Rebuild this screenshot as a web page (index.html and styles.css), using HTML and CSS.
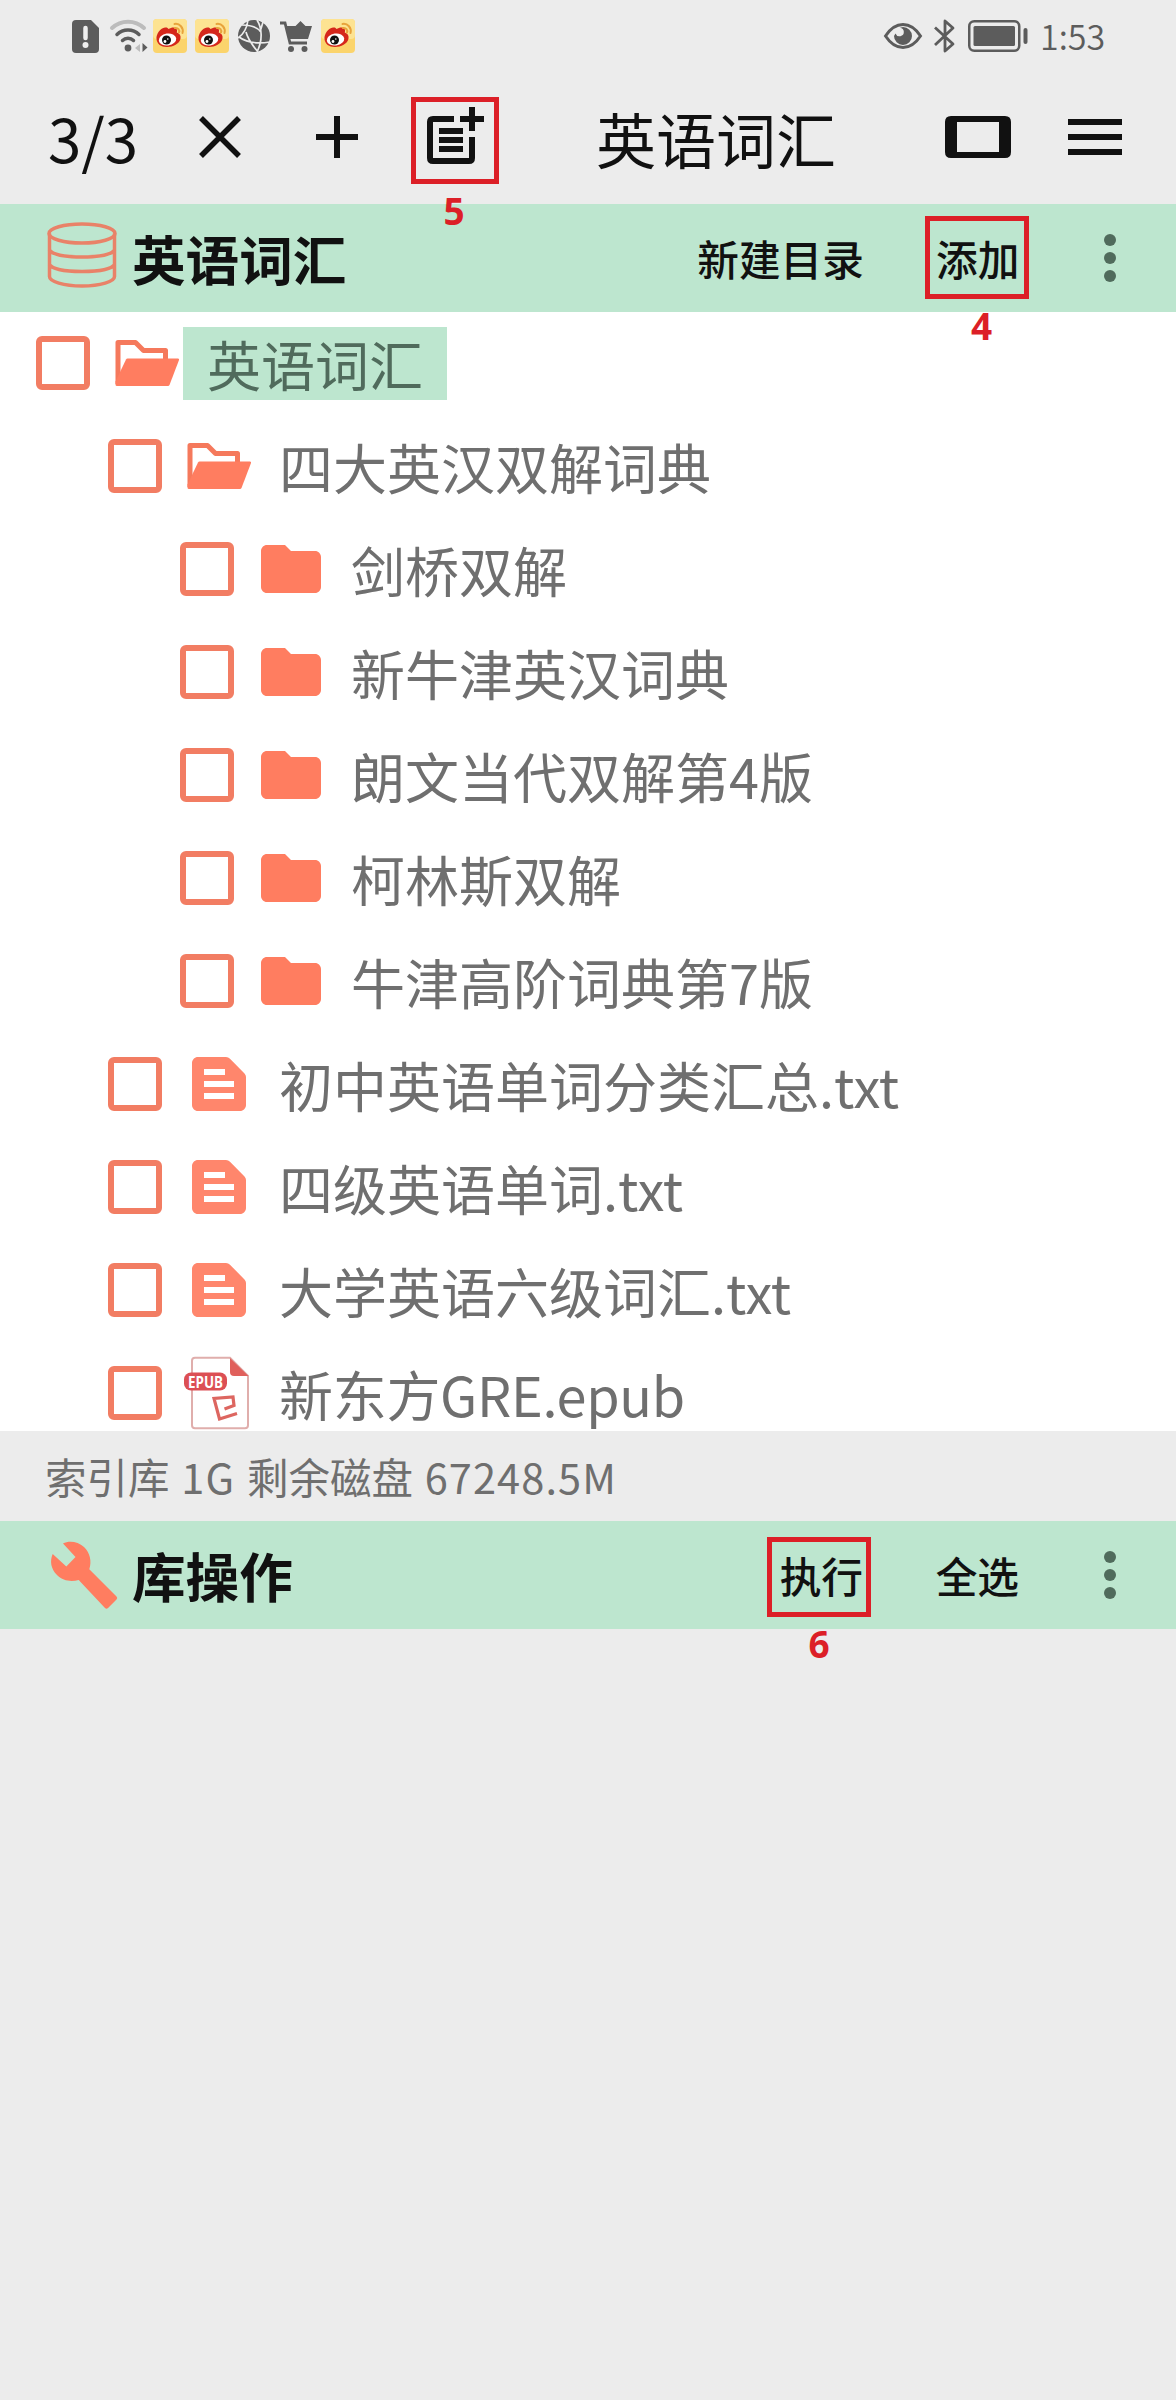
FILE: index.html
```html
<!DOCTYPE html>
<html lang="zh-CN">
<head>
<meta charset="utf-8">
<title>英语词汇</title>
<link rel="stylesheet" href="styles.css">
</head>
<body>
<svg class="defs" aria-hidden="true">
  <symbol id="weibo" viewBox="0 0 34 34">
    <rect width="34" height="34" rx="4" fill="#fbd46c"/>
    <rect width="34" height="20" rx="4" fill="#fde392"/>
    <path d="M3.500 20C3 15 7.500 9 12 8.500c2-.3 3 .5 3.500 1.500 3-2 8-2.500 8.500 1 .2 1-.2 2-.2 2.500 3 1 4.200 3 3.700 6C26.500 25 20 28 14 28 8 28 4 25 3.500 20z" fill="#d5271b"/>
    <ellipse cx="14.500" cy="20.500" rx="8.800" ry="6" fill="#fff" transform="rotate(-8 14.500 20.500)"/>
    <circle cx="13.500" cy="21" r="4.500" fill="#111"/>
    <circle cx="12" cy="22.500" r="1.400" fill="#fff"/>
    <circle cx="14.800" cy="20" r=".8" fill="#fff"/>
    <path d="M21.500 5c5-1 9.500 4 8 9M22 9c3-.5 5 2 4 4.500" fill="none" stroke="#e8a33c" stroke-width="2" stroke-linecap="round"/>
  </symbol>
  <symbol id="check" viewBox="0 0 72 72">
    <rect x="12" y="12" width="48" height="48" rx="3" fill="none" stroke="#f27d63" stroke-width="6"/>
  </symbol>
  <symbol id="open" viewBox="0 0 72 72">
    <path d="M7 57V15.500h17.500l8 8H54.500V34" fill="none" stroke="#f5795c" stroke-width="5" stroke-linejoin="round"/>
    <path d="M16.500 31.500H67q1.500 0 1 1.500L58.500 58q-.5 1-1.500 1H6q-1.500 0-1.500-1.500v-3L15 32.500q.5-1 1.500-1z" fill="#ff7d60"/>
  </symbol>
  <symbol id="folder" viewBox="0 0 72 72">
    <path d="M30 12H12c-3.300 0-6 2.700-6 6v36c0 3.300 2.700 6 6 6h48c3.300 0 6-2.700 6-6V24c0-3.300-2.700-6-6-6H36z" fill="#ff7d60"/>
  </symbol>
  <symbol id="txt" viewBox="0 0 72 72">
    <path fill-rule="evenodd" d="M43 9H15c-3.300 0-6 2.700-6 6v42c0 3.300 2.700 6 6 6h42c3.300 0 6-2.700 6-6V29q0-2-1.500-3.500L47 10.700Q45.300 9 43 9zM21 21h21v6H21zM21 33h30v6H21zM21 45h30v6H21z" fill="#ff866c"/>
  </symbol>
  <symbol id="more" viewBox="0 0 12 48">
    <circle cx="6" cy="6" r="6"/><circle cx="6" cy="24" r="6"/><circle cx="6" cy="42" r="6"/>
  </symbol>
</svg>

<header class="status">
  <div class="status-left">
    <svg class="s-warn" viewBox="0 0 27 33"><path d="M4 0h15l8 8v21q0 4-4 4H4q-4 0-4-4V4q0-4 4-4z" fill="#5c5c5c"/><path d="M13.500 8v10" stroke="#eee" stroke-width="4.500" stroke-linecap="round"/><circle cx="13.500" cy="25" r="3" fill="#eee"/></svg>
    <svg class="s-wifi" viewBox="0 0 38 33"><g fill="none" stroke-width="4" stroke-linecap="round"><path d="M2 8C11-.5 25-.5 34 8" stroke="#bcbcbc"/><path d="M7 14.500c6-6 16-6 22 0M12.500 20.500c3-3 8-3 11 0" stroke="#5c5c5c" stroke-width="3.500"/></g><circle cx="18" cy="28" r="3.400" fill="#5c5c5c"/><path d="M30 24v8l-5-4z" fill="#bcbcbc"/><path d="M32.500 23v9l5-4.500z" fill="#5c5c5c"/></svg>
    <svg class="s-weibo"><use href="#weibo"/></svg>
    <svg class="s-weibo"><use href="#weibo"/></svg>
    <svg class="s-globe" viewBox="0 0 32 32"><circle cx="16" cy="16" r="16" fill="#5c5c5c"/><path d="M10 0c-1 8-4 14-10 18M4 5c9 0 16 3 19 7M19 0c5 8 6 20 0 32M1 17c8 6 18 7 31 5M8 12c2 8 7 14 12 20M22 12l3-10" fill="none" stroke="#ececec" stroke-width="1.700"/></svg>
    <svg class="s-cart" viewBox="0 0 32 31"><path d="M0 2h5l5 20h17" fill="none" stroke="#5c5c5c" stroke-width="2.800"/><path d="M5.500 5h10l5-5 5 5H32l-4 13H9z" fill="#5c5c5c"/><circle cx="11" cy="28" r="3" fill="#5c5c5c"/><circle cx="24.500" cy="28" r="3" fill="#5c5c5c"/></svg>
    <svg class="s-weibo"><use href="#weibo"/></svg>
  </div>
  <div class="status-right">
    <svg class="s-eye" viewBox="0 0 38 26"><path d="M1.500 13Q9 1.500 19 1.500T36.500 13Q29 24.500 19 24.500T1.500 13z" fill="none" stroke="#5c5c5c" stroke-width="3"/><path d="M19 4a9 9 0 1 1-9 9l1.500-2.500a4.300 4.300 0 1 0 4.500-5.800z" fill="#5c5c5c"/></svg>
    <svg class="s-bt" viewBox="0 0 22 34"><path d="M2 8.500l18 16.500-8 7V2l8 7L2 26" fill="none" stroke="#5c5c5c" stroke-width="2.800" stroke-linejoin="round"/></svg>
    <svg class="s-batt" viewBox="0 0 60 32"><rect x="1.250" y="1.250" width="50" height="29.500" rx="5" fill="none" stroke="#5c5c5c" stroke-width="2.500"/><rect x="5.500" y="6" width="41.500" height="20" rx="1.500" fill="#5c5c5c"/><rect x="55.500" y="8" width="4" height="16" rx="2" fill="#5c5c5c"/></svg>
    <span class="clock">1:53</span>
  </div>
</header>

<nav class="toolbar">
  <span class="pager">3/3</span>
  <svg class="t-close" viewBox="0 0 42 42"><path d="M2 2l38 38M40 2L2 40"/></svg>
  <svg class="t-plus" viewBox="0 0 42 42"><path d="M21 0v42M0 21h42"/></svg>
  <div class="mark mark-note">
    <svg class="t-note" viewBox="0 0 57 57"><path d="M27 12H6q-3 0-3 3v36q0 3 3 3h36q3 0 3-3V30M33 12h24M45 0v24M12 24h24M12 33h24M12 42h24"/></svg>
    <span class="num">5</span>
  </div>
  <h1>英语词汇</h1>
  <svg class="t-screen" viewBox="0 0 66 42"><path fill-rule="evenodd" d="M6 0h54q6 0 6 6v30q0 6-6 6H6q-6 0-6-6V6q0-6 6-6zM12 6v30h42V6z"/></svg>
  <svg class="t-menu" viewBox="0 0 54 36"><path d="M0 3h54M0 18h54M0 33h54"/></svg>
</nav>

<section class="bar">
  <svg class="b-icon" viewBox="0 0 72 72"><g fill="none" stroke="#e98268" stroke-width="3.500"><ellipse cx="36" cy="11.500" rx="33" ry="9.500"/><path d="M3.500 11.500v43c0 5 14 9.500 32.500 9.500s32.500-4.500 32.500-9.500v-43M3 27.500c3 5 16 7.500 33 7.500s30-2.500 33-7.500M3 42c3 5 16 7.500 33 7.500s30-2.500 33-7.500"/></g></svg>
  <h2>英语词汇</h2>
  <span class="action first">新建目录</span>
  <div class="mark mark-add"><span class="action">添加</span><span class="num">4</span></div>
  <svg class="more"><use href="#more"/></svg>
</section>

<main class="tree">
  <div class="row"><svg><use href="#check"/></svg><svg><use href="#open"/></svg><span class="label selected">英语词汇</span></div>
  <div class="row l1"><svg><use href="#check"/></svg><svg><use href="#open"/></svg><span class="label">四大英汉双解词典</span></div>
  <div class="row l2"><svg><use href="#check"/></svg><svg><use href="#folder"/></svg><span class="label">剑桥双解</span></div>
  <div class="row l2"><svg><use href="#check"/></svg><svg><use href="#folder"/></svg><span class="label">新牛津英汉词典</span></div>
  <div class="row l2"><svg><use href="#check"/></svg><svg><use href="#folder"/></svg><span class="label">朗文当代双解第4版</span></div>
  <div class="row l2"><svg><use href="#check"/></svg><svg><use href="#folder"/></svg><span class="label">柯林斯双解</span></div>
  <div class="row l2"><svg><use href="#check"/></svg><svg><use href="#folder"/></svg><span class="label">牛津高阶词典第7版</span></div>
  <div class="row l1"><svg><use href="#check"/></svg><svg><use href="#txt"/></svg><span class="label">初中英语单词分类汇总.txt</span></div>
  <div class="row l1"><svg><use href="#check"/></svg><svg><use href="#txt"/></svg><span class="label">四级英语单词.txt</span></div>
  <div class="row l1"><svg><use href="#check"/></svg><svg><use href="#txt"/></svg><span class="label">大学英语六级词汇.txt</span></div>
  <div class="row l1"><svg><use href="#check"/></svg><svg viewBox="0 0 72 72"><path d="M47 .7H12q-3 0-3 3v64.600q0 3 3 3h50q3 0 3-3V19z" fill="#fff" stroke="#e0aeac" stroke-width="2"/><path d="M47 1v14q0 4 4 4h14.500z" fill="#e0605c"/><rect x="1" y="15.500" width="43" height="18" rx="7" fill="#dc4f54"/><text class="epub" x="22.500" y="30.500" text-anchor="middle" textLength="35" lengthAdjust="spacingAndGlyphs">EPUB</text><path d="M41.500 52l9.500-3.500-1-8.500-19 1.500 5.500 20.500L54 56.500" fill="none" stroke="#dd6660" stroke-width="3.200"/></svg><span class="label"><span class="tight">新东方GRE.epub</span></span></div>
</main>

<div class="storage">索引库 <span class="latin">1G</span> 剩余磁盘 <span class="latin">67248.5M</span></div>

<section class="bar">
  <svg class="b-icon" viewBox="0 0 72 72"><path d="M17 4.500C23 1.500 32 2.500 38 8c6 6 8 14 5.300 22.300L70.500 57.500q1.500 1.500 0 3L62 69q-1.500 1.500-3 0L32.700 41C25 43 17 42 11 36 5 30 3.500 22 6.700 15l13.600 12.500L29.500 18z" fill="#ff7d60"/></svg>
  <h2>库操作</h2>
  <div class="mark mark-run first"><span class="action">执行</span><span class="num">6</span></div>
  <span class="action last">全选</span>
  <svg class="more"><use href="#more"/></svg>
</section>
</body>
</html>
```

FILE: styles.css
```css
* { box-sizing: border-box; }
body {
  margin: 0;
  width: 1176px;
  height: 2400px;
  overflow: hidden;
  background: #ececec;
  color: #111;
  font-family: "Noto Sans CJK SC", sans-serif;
}
svg { display: block; flex: none; overflow: visible; }
h1, h2 { margin: 0; font-weight: 400; white-space: nowrap; }
.defs { position: absolute; width: 0; height: 0; }

.status { display: flex; justify-content: space-between; height: 72px; padding: 0 73px 0 72px; }
.status-left, .status-right { display: flex; align-items: center; }
.s-warn { width: 27px; height: 33px; margin-right: 11px; }
.s-wifi { width: 38px; height: 33px; margin-right: 5px; }
.s-weibo { width: 34px; height: 34px; margin-right: 8px; }
.s-globe { width: 32px; height: 32px; margin: 0 10px 0 1px; }
.s-cart { width: 32px; height: 31px; margin-right: 9px; }
.s-eye { width: 38px; height: 26px; margin-right: 11px; }
.s-bt { width: 22px; height: 34px; margin-right: 13px; }
.s-batt { width: 60px; height: 32px; margin-right: 12px; }
.clock { width: 63px; font-size: 34px; font-weight: 350; line-height: 74px; color: #5c5c5c; white-space: nowrap; }

.toolbar { display: flex; align-items: center; height: 132px; padding: 0 54px 2px 48px; }
.toolbar svg { fill: none; stroke: #111; stroke-width: 6; }
.pager { width: 151px; font-size: 60px; line-height: 88px; }
.toolbar .t-close { width: 42px; height: 42px; margin-right: 75px; stroke-width: 5.500; }
.t-plus { width: 42px; height: 42px; margin-right: 53px; }
.toolbar .t-screen { width: 66px; height: 42px; margin-right: 57px; fill: #111; stroke: none; }
.t-menu { width: 54px; height: 36px; }
.toolbar h1 { width: 349px; margin-left: 97px; padding-top: 1px; font-size: 60px; line-height: 88px; }

.mark { position: relative; flex: none; border: 5px solid #dc1f27; }
.mark-note { width: 88px; height: 87px; margin-top: 7px; padding: 5px 0 0 11px; }
.t-note { width: 57px; height: 57px; }
.num {
  position: absolute;
  left: -2px;
  right: 0;
  top: calc(100% + 7px);
  font: 700 37px/50px "Noto Sans", sans-serif;
  text-align: center;
  color: #dc1f27;
}
.mark-add .num { left: 9px; }
.mark-run .num { left: 1px; }

.bar { display: flex; align-items: center; height: 108px; padding: 0 60px 0 46px; background: #bde6cf; }
.b-icon { width: 72px; height: 72px; margin-right: 14px; }
.bar h2 { font-size: 53.600px; font-weight: 700; line-height: 80px; }
.action { font-size: 41.700px; font-weight: 500; line-height: 60px; white-space: nowrap; }
.first { margin-left: auto; }
.mark-add { width: 104px; height: 83px; margin: -2px 75px 0 61px; padding: 7px 0 0 6px; }
.mark-run { width: 104px; height: 80px; margin-top: 3px; padding: 3px 0 0 8px; }
.last { margin: 0 85px 0 65px; }
.more { width: 12px; height: 48px; fill: #506b5c; }

.tree { height: 1119px; overflow: hidden; background: #fff; }
.row { display: flex; height: 103px; padding: 15px 0 0 27px; }
.row:last-child { height: 89px; }
.row svg { width: 72px; height: 72px; }
.row svg:nth-child(2) { margin-left: 12px; }
.row.l1 { padding-left: 99px; }
.row.l2 { padding-left: 171px; }
.label { height: 73px; padding: 0 24px; font-size: 54px; line-height: 74px; color: #6f6f6f; white-space: nowrap; }
.selected { background: #bde6cf; color: #506b5c; }
.tight { letter-spacing: -.3px; }
.epub { font: 700 16px "Open Sans", sans-serif; fill: #fff; }

.storage { height: 90px; padding-left: 45px; font-size: 41.500px; line-height: 90px; word-spacing: 2.500px; color: #6f6f6f; white-space: nowrap; }
.latin { letter-spacing: 1.100px; }
```
